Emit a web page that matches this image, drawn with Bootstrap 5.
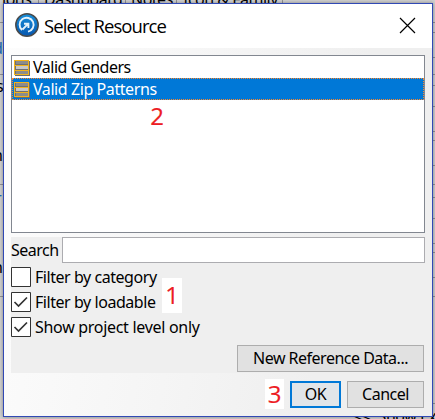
<!DOCTYPE html>
<html lang="en">
<head>
<meta charset="utf-8">
<title>Select Resource</title>
<link href="https://cdn.jsdelivr.net/npm/bootstrap@5.3.0/dist/css/bootstrap.min.css" rel="stylesheet">
<style>
body{width:435px;height:419px;background:#d2d2d2;font:16px/22px "Noto Sans","Open Sans",sans-serif;color:#000;letter-spacing:-.5px}
.desk{width:435px;height:419px}
.behind{position:absolute;white-space:nowrap;line-height:20px}
.edge-line{position:absolute;height:1px;background:#929297}
.dialog{position:absolute;left:3px;top:3px;width:430px;height:414px;border:1px solid #3149b5;background:linear-gradient(100deg,#fdfdfd 0,#f5f5f5 45%,#efefef 75%);box-shadow:0 0 4px #0006}
.titlebar{height:44px;background:#fff;padding:0 16px 0 11px}
.caption{font:18.5px/26px "Open Sans","Noto Sans",sans-serif;letter-spacing:-.92px;margin:-1px 0 0 5px}
.logo{margin-top:-2px}
.close-x{margin-top:-1px}
.listing{height:178px;margin:7px 7px 0;border:1px solid #828790;background:#fff}
.entry{height:22px;padding-left:1px;white-space:nowrap}
.entry svg{margin-right:3px}
.entry.chosen{background:#0078d7;color:#fff;outline:1px dotted #ff8728;outline-offset:-1px;letter-spacing:-.42px}
.options{height:136px;margin:4px 7px 0;background:#efefef}
.search{height:26px}
.search label{width:51px}
.search input{border:1px solid #acacb0;background:#fff;height:26px;min-width:0;outline:0}
.tick{height:20px;margin-bottom:5px;letter-spacing:-.45px}
.tick svg{margin-right:4px}
.tick.wide{letter-spacing:-.3px}
.push{height:27px;border:1px solid #adadad;border-radius:0;background:#e1e1e1;padding:0;font:inherit;letter-spacing:inherit;color:#000;line-height:23px}
.push.main{border:2px solid #0078d7;background:#e1e5e9;line-height:21px}
.note{position:absolute;color:#ed1c24;font:24px/30px "Open Sans","Noto Sans",sans-serif;letter-spacing:0;text-align:center;background:#fff;-webkit-text-stroke:.2px #ed1c24}
</style>
<script src="https://cdn.jsdelivr.net/npm/bootstrap@5.3.0/dist/js/bootstrap.bundle.min.js"></script>
</head>
<body>
<div class="desk position-relative overflow-hidden">
  <span class="behind" style="left:2px;top:-11px">ions</span><span class="behind" style="left:44px;top:-11px">Dashboard</span>
  <span class="behind" style="left:131px;top:-11px">Notes</span><span class="behind" style="left:183px;top:-11px">Icon &amp; Family</span>
  <i class="edge-line" style="left:38px;top:0;width:1px;height:4px"></i><i class="edge-line" style="left:125px;top:0;width:1px;height:4px"></i><i class="edge-line" style="left:176px;top:0;width:1px;height:4px"></i><i class="edge-line" style="left:282px;top:0;width:1px;height:4px"></i>
  <span class="behind" style="left:-4px;top:76px">s</span><span class="behind" style="left:-7px;top:145px">n</span>
  <span class="behind" style="left:-5px;top:188px;color:#216bb8">r</span><span class="behind" style="left:-7px;top:257px">n</span>
  <span class="behind" style="left:-7px;top:38px;color:#216bb8">d</span>
  <span class="behind" style="left:353px;top:406px">&lt;&lt;&nbsp; Show Ex</span>
  <i class="edge-line" style="left:0;top:22px;width:4px"></i><i class="edge-line" style="left:0;top:74px;width:4px"></i><i class="edge-line" style="left:0;top:184px;width:4px"></i><i class="edge-line" style="left:0;top:296px;width:4px"></i>
  <i class="edge-line" style="left:432px;top:22px;width:4px"></i><i class="edge-line" style="left:432px;top:32px;width:4px"></i><i class="edge-line" style="left:432px;top:57px;width:4px"></i><i class="edge-line" style="left:432px;top:74px;width:4px"></i><i class="edge-line" style="left:432px;top:85px;width:4px"></i><i class="edge-line" style="left:432px;top:106px;width:4px"></i><i class="edge-line" style="left:432px;top:131px;width:4px"></i><i class="edge-line" style="left:432px;top:140px;width:4px"></i><i class="edge-line" style="left:432px;top:165px;width:4px"></i><i class="edge-line" style="left:432px;top:184px;width:4px"></i><i class="edge-line" style="left:432px;top:197px;width:4px"></i><i class="edge-line" style="left:432px;top:218px;width:4px"></i><i class="edge-line" style="left:432px;top:243px;width:4px"></i><i class="edge-line" style="left:432px;top:252px;width:4px"></i><i class="edge-line" style="left:432px;top:277px;width:4px"></i><i class="edge-line" style="left:432px;top:296px;width:4px"></i><i class="edge-line" style="left:432px;top:403px;width:4px"></i>

  <main class="dialog">
    <header class="titlebar d-flex align-items-center">
      <svg class="logo" width="24" height="24" viewBox="0 0 24 24" fill="none"><defs><linearGradient id="blue" x2="0" y2="1"><stop stop-color="#1790dc"/><stop offset="1" stop-color="#0756ae"/></linearGradient></defs><circle cx="12" cy="12" r="11.2" fill="url(#blue)" stroke="#4a4a4a" stroke-width="1.5"/><path d="M7 17A7 7 0 1 1 13 18.6M7.5 16.5 12.8 11.2M9 10.7H13.4V15" stroke="#e4f2fb" stroke-width="1.9"/></svg>
      <span class="caption me-auto">Select Resource</span>
      <svg class="close-x" width="17" height="17" viewBox="0 0 17 17" stroke="#000" stroke-width="1.2"><path d="m1 1 15 15M16 1 1 16"/></svg>
    </header>
    <section class="listing">
      <svg class="d-none"><symbol id="sheet" viewBox="0 0 17 18"><path fill="#686b70" d="M2 3h15v15H2z"/><path fill="#f1b31c" d="M1 2h15v15H1z"/><path fill="#8c8c8c" d="M2 3h13v4H2zM2 13h13v3H2z"/><path fill="#c8c8c8" d="M2 8h13v4H2z"/><path fill="#707070" d="M2 3h1v4H2zM2 8h1v4H2zM2 13h1v3H2zM2 6h13v1H2zM2 11h13v1H2z"/></symbol></svg>
      <div class="entry d-flex align-items-center"><svg width="17" height="18" shape-rendering="crispEdges"><use href="#sheet"/></svg><span>Valid Genders</span></div>
      <div class="entry chosen d-flex align-items-center"><svg width="17" height="18" shape-rendering="crispEdges"><use href="#sheet"/></svg><span>Valid Zip Patterns</span></div>
    </section>
    <section class="options d-flex flex-column">
      <div class="search d-flex align-items-center mb-1"><label for="q">Search</label><input id="q" class="flex-fill"></div>
      <div class="tick d-flex align-items-center"><svg width="20" height="20" fill="#fff" stroke="#333"><path d="M.5.5h19v19H.5z"/></svg><span>Filter by category</span></div>
      <div class="tick d-flex align-items-center"><svg width="20" height="20" fill="#fff" stroke="#333"><path d="M.5.5h19v19H.5z"/><path fill="none" stroke-width="1.7" d="m3.5 10 4 4L16 5.5"/></svg><span>Filter by loadable</span></div>
      <div class="tick wide d-flex align-items-center"><svg width="20" height="20" fill="#fff" stroke="#333"><path d="M.5.5h19v19H.5z"/><path fill="none" stroke-width="1.7" d="m3.5 10 4 4L16 5.5"/></svg><span>Show project level only</span></div>
      <button class="push btn align-self-end" style="width:187px;margin:3px 1px 0 0">New Reference Data...</button>
    </section>
    <footer class="d-flex justify-content-end" style="margin:8px 8px 0;gap:6px">
      <button class="push main btn" style="width:51px">OK</button><button class="push btn" style="width:77px">Cancel</button>
    </footer>
  </main>
  <span class="note" style="left:147px;top:101px;width:20px">2</span>
  <span class="note" style="left:162px;top:278px;width:20px;height:35px;line-height:34px">1</span>
  <span class="note" style="left:265px;top:379px;width:19px">3</span>
</div>
</body>
</html>
